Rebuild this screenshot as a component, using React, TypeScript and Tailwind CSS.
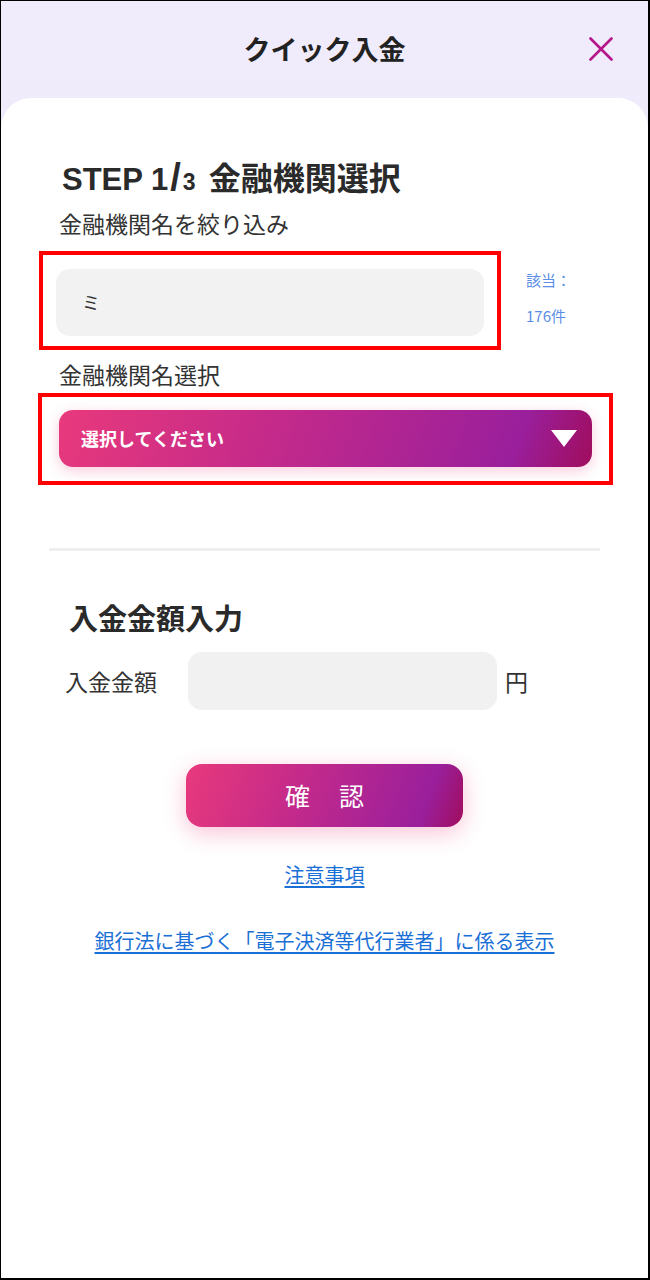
import React from 'react';

const jp = { fontFamily: '"Noto Sans CJK JP", "Noto Sans", sans-serif' };
const latin = { fontFamily: '"Liberation Sans", Arial, sans-serif' };

const CloseIcon = () => (
  <svg width="24" height="24" viewBox="0 0 24 24" fill="none">
    <path d="M1.5 1.5 L22.5 22.5 M22.5 1.5 L1.5 22.5" stroke="#b5178a" strokeWidth="2.6" strokeLinecap="round" />
  </svg>
);

const pinkGrad =
  'bg-[linear-gradient(110deg,#e8397c_0%,#c42a8a_40%,#9a1f9c_85%,#a00d5c_100%)]';

export default function App() {
  return (
    <div
      style={jp}
      className="w-[650px] h-[1280px] flex flex-col bg-gradient-to-b from-[#f0ecfc] to-[#e8e4f8] border-t border-l border-r-2 border-b-2 border-black overflow-hidden"
    >
      {/* header */}
      <div className="h-[97px] relative flex items-start justify-center shrink-0 pt-[28px]">
        <h1 className="text-[27px] font-bold text-[#222] leading-[40px]">クイック入金</h1>
        <button className="absolute right-[35px] top-[36px]">
          <CloseIcon />
        </button>
      </div>

      {/* card */}
      <div className="flex-1 bg-white rounded-t-[30px] pt-[58px]">
        <div className="px-[58px]">
          <h2 className="text-[31px] font-bold text-[#2a2a2a] leading-[40px] pl-[3px] flex items-baseline">
            <span style={latin}>STEP 1</span>
            <span className="text-[38px] mx-[2px] leading-[30px]" style={latin}>/</span>
            <span className="text-[23px] mr-[13px]" style={latin}>3</span>
            <span className="text-[32px]">金融機関選択</span>
          </h2>
          <p className="text-[23px] text-[#333] mt-[7px] leading-[28px]">金融機関名を絞り込み</p>
        </div>

        {/* filter input */}
        <div className="flex items-start mt-[14px]">
          <div className="ml-[38px] w-[462px] h-[99px] border-[4px] border-[#ff0000] px-[13px] pt-[14px]">
            <div className="h-[67px] bg-[#f2f2f2] rounded-[14px] flex items-center pl-[26px] text-[18px] text-[#333]">ミ</div>
          </div>
          <div className="ml-[25px] pt-[11px] text-[15px] text-[#5a8ee6] leading-[36px]">
            <div>該当：</div>
            <div>176件</div>
          </div>
        </div>

        <p className="px-[58px] text-[23px] text-[#333] mt-[10px] leading-[28px]">金融機関名選択</p>

        {/* select */}
        <div className="ml-[37px] mt-[5px] w-[575px] h-[92px] border-[4px] border-[#ff0000] px-[17px] pt-[13px]">
          <div className={`h-[57px] rounded-[14px] ${pinkGrad} shadow-[0_4px_14px_rgba(232,57,124,0.25)] flex items-center justify-between pl-[22px] pr-[15px]`}>
            <span className="text-white font-bold text-[18px]">選択してください</span>
            <svg width="26" height="17" viewBox="0 0 26 17">
              <path d="M0 0 H26 L13 17 Z" fill="#fff" />
            </svg>
          </div>
        </div>

        {/* divider */}
        <div className="mx-[48px] mt-[63px] h-[3px] bg-[#efefef]" />

        {/* amount */}
        <h2 className="px-[68px] mt-[48px] text-[29px] font-bold text-[#2a2a2a] leading-[36px]">入金金額入力</h2>
        <div className="flex items-center mt-[17px] pl-[64px]">
          <span className="text-[23px] text-[#333] w-[123px]">入金金額</span>
          <div className="w-[309px] h-[58px] bg-[#f1f1f1] rounded-[14px]" />
          <span className="ml-[8px] text-[23px] text-[#333]">円</span>
        </div>

        {/* confirm */}
        <div className="flex justify-center mt-[54px]">
          <button className={`w-[277px] h-[63px] rounded-[16px] ${pinkGrad} shadow-[0_6px_22px_rgba(232,57,124,0.3)] text-white text-[25px] tracking-[29px] pl-[29px]`}>
            確認
          </button>
        </div>

        <div className="flex flex-col items-center mt-[34px] gap-[38px]">
          <a className="text-[20px] leading-[28px] text-[#1a6fd6] underline underline-offset-[3px]">注意事項</a>
          <a className="text-[20px] leading-[28px] text-[#1a6fd6] underline underline-offset-[3px]">
            銀行法に基づく「電子決済等代行業者」に係る表示
          </a>
        </div>
      </div>
    </div>
  );
}
